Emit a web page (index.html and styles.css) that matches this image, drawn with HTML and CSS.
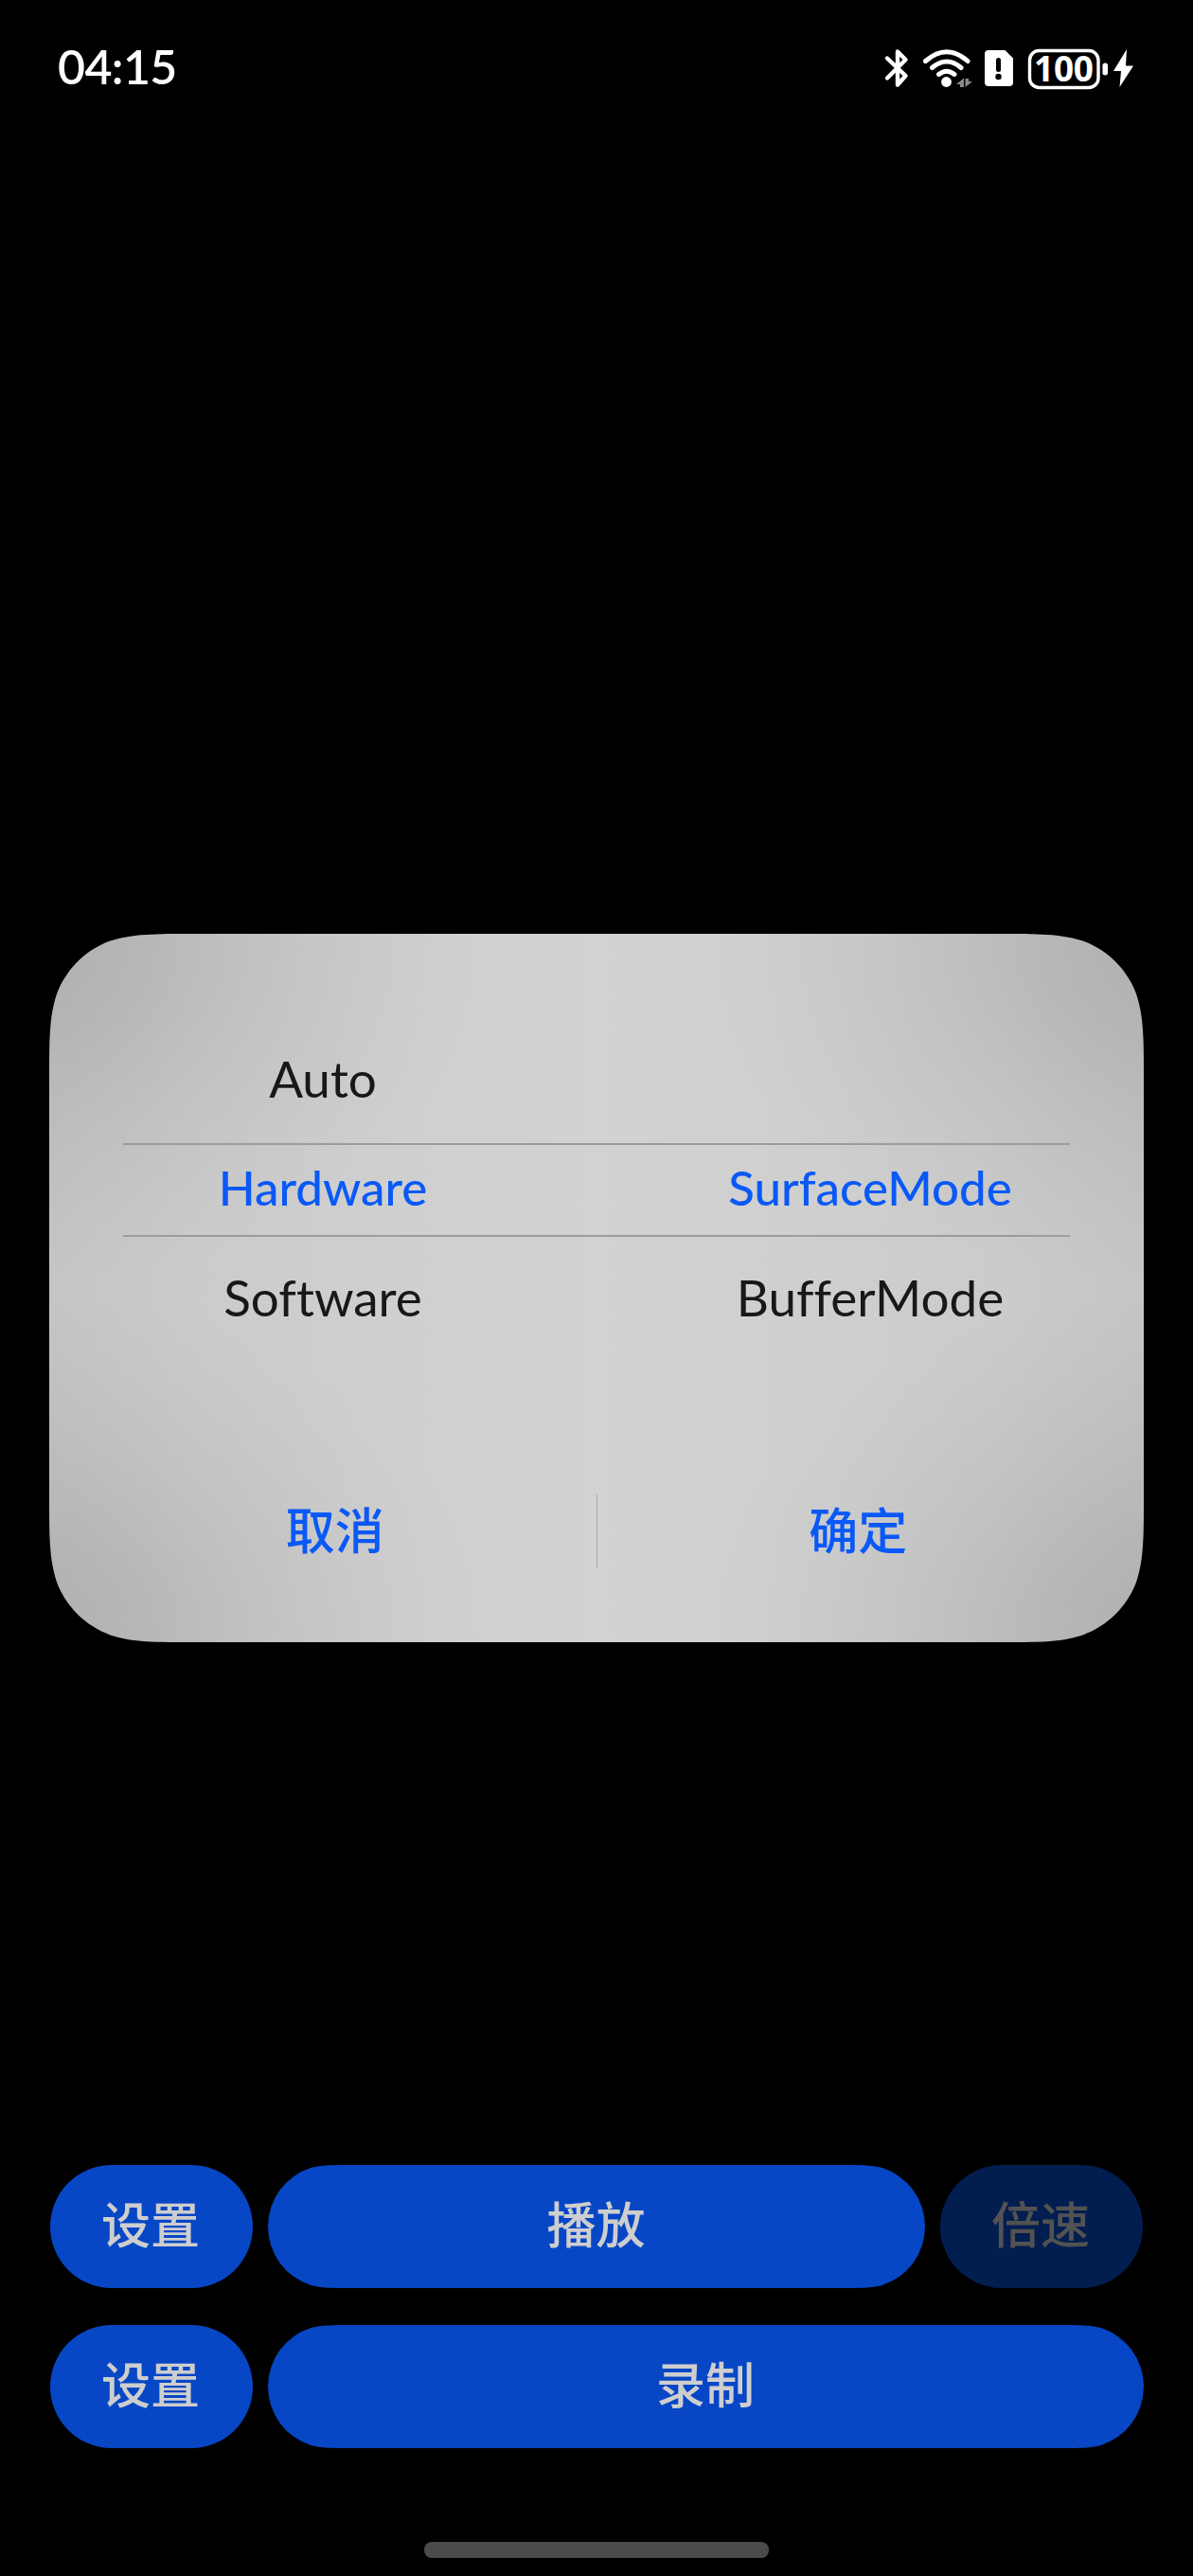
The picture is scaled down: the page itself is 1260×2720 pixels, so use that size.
FILE: index.html
```html
<!DOCTYPE html>
<html lang="zh-CN">
<head>
<meta charset="utf-8">
<title>播放器</title>
<link rel="stylesheet" href="styles.css">
</head>
<body>
<div class="screen">
  <header class="status">
    <time class="clock">04:15</time>
    <svg class="icons" width="280" height="60" viewBox="920 40 280 60" aria-label="status icons">
      <g fill="none" stroke="#fff" stroke-linecap="round" stroke-linejoin="round">
        <path stroke-width="4.4" d="M937 61.500 956.500 80 948 89.500V54.500L956.500 63 937 82.500"/>
        <path stroke-width="5" d="M977.500 64.500Q1000 45 1022 64.500M984.500 71.500Q1000 58.500 1015 71.500M991.500 78.500Q1000 72 1008 78.500"/>
      </g>
      <circle cx="999.500" cy="86.500" r="5.400" fill="#fff"/>
      <path fill="#8a8a8a" d="M1018 82.500V92H1014V89H1010ZM1019.500 92V83H1023V86H1027Z"/>
      <path fill="#fff" d="M1044 53H1061.500L1070 61.500V87Q1070 91 1066 91H1044Q1040 91 1040 87V57Q1040 53 1044 53Z"/>
      <path stroke="#000" stroke-width="5" stroke-linecap="round" d="M1054.500 63.500V73.500"/>
      <circle cx="1054.500" cy="81" r="3.200"/>
      <rect x="1087.500" y="53.500" width="72.500" height="39" rx="10" fill="none" stroke="#fff" stroke-width="3.400"/>
      <rect x="1164.500" y="66.500" width="5.500" height="13" rx="2.700" fill="#fff"/>
      <path fill="#fff" d="M1190 52 1176 75H1184L1182.500 92 1197 69.500H1189Z"/>
      <text class="battery" x="1123.500" y="86" text-anchor="middle" textLength="63">100</text>
    </svg>
  </header>

  <section class="dialog">
    <div class="picker">
      <div class="column">
        <span class="option">Auto</span>
        <span class="option current">Hardware</span>
        <span class="option">Software</span>
      </div>
      <div class="column">
        <span class="option"></span>
        <span class="option current">SurfaceMode</span>
        <span class="option">BufferMode</span>
      </div>
    </div>
    <div class="actions">
      <button class="action">取消</button>
      <div class="divider"></div>
      <button class="action">确定</button>
    </div>
  </section>

  <footer class="controls">
    <div class="row first">
      <button class="pill small">设置</button>
      <button class="pill play">播放</button>
      <button class="pill small disabled">倍速</button>
    </div>
    <div class="row">
      <button class="pill small">设置</button>
      <button class="pill record">录制</button>
    </div>
    <div class="home"></div>
  </footer>
</div>
</body>
</html>
```
FILE: styles.css
```css
* { box-sizing: border-box; }
body { margin: 0; background: #000; }
button { border: 0; padding: 0; background: none; }
.screen {
  width: 1260px; height: 2720px; background: #000;
  display: flex; flex-direction: column;
  font-family: Lato, "Noto Sans CJK SC", sans-serif;
}
.status {
  height: 986px; padding: 40px 60px 0 61px;
  display: flex; justify-content: space-between; align-items: flex-start;
}
.clock { color: #fff; font-size: 50px; line-height: 61px; font-weight: 600; letter-spacing: -0.6px; }
.battery { fill: #fff; font: 700 37px "Noto Sans", sans-serif; }

.dialog {
  --shade: rgba(0,0,0,.105), rgba(0,0,0,.085) 25%, rgba(0,0,0,.045) 55%, rgba(0,0,0,.015) 80%, transparent;
  width: 1156px; height: 748px; margin: 0 52px; padding: 95px 78px 0;
  background:
    radial-gradient(ellipse 470px 370px at 0 0, var(--shade)),
    radial-gradient(ellipse 470px 370px at 100% 0, var(--shade)),
    radial-gradient(ellipse 470px 370px at 0 100%, var(--shade)),
    radial-gradient(ellipse 470px 370px at 100% 100%, var(--shade)),
    linear-gradient(90deg, #c5c5c5, #cbcbcb 13%, #cfcfcf 30%, #d2d2d2 50%, #cfcfcf 70%, #cbcbcb 87%, #c5c5c5);
  clip-path: path("M155.900 0H1000.100C1045 0 1067.500 0 1091.600 7.600C1118.100 17.200 1138.800 37.900 1148.400 64.400C1156 88.500 1156 111 1156 155.900V592.100C1156 637 1156 659.500 1148.400 683.600C1138.800 710.100 1118.100 730.800 1091.600 740.400C1067.500 748 1045 748 1000.100 748H155.900C111 748 88.500 748 64.400 740.400C37.900 730.800 17.200 710.100 7.600 683.600C0 659.500 0 637 0 592.100V155.900C0 111 0 88.500 7.600 64.400C17.200 37.900 37.900 17.200 64.400 7.600C88.500 0 111 0 155.900 0Z");
}
.picker { display: flex; justify-content: space-between; height: 350px;
  background: linear-gradient(#9c9c9c, #9c9c9c) 0 126px / 100% 2px no-repeat,
              linear-gradient(#9c9c9c, #9c9c9c) 0 223px / 100% 2px no-repeat; }
.column { width: 422px; display: grid; grid-template-rows: 115px 115px 117px; }
.option {
  display: flex; align-items: center; justify-content: center;
  font-size: 53px; color: #181818; font-variant-ligatures: none;
}
.current { color: #0a59f7; font-weight: 500; font-size: 51px; }
.actions { display: flex; align-items: center; margin: 121px -52px 0; }
.action {
  flex: 1; height: 130px; padding-bottom: 8px; color: #0a59f7;
  font: 500 52px "Noto Sans CJK SC", sans-serif;
}
.divider { width: 1px; height: 78px; background: #adadad; }
.controls { margin-top: 552px; padding: 0 52px 0 53px; display: flex; flex-direction: column; gap: 39px; }
.row { display: flex; gap: 16px; }
.first { padding-right: 1px; }
.pill {
  height: 130px; padding: 0 2px 9px 0; border-radius: 65px; background: #0747c6; color: #cecece;
  font: 500 52px "Noto Sans CJK SC", sans-serif;
}
.small { width: 214px; }
.play, .record { padding-right: 1px; border-radius: 0; }
.play {
  width: 694px;
  clip-path: path("M86 0H608C626 0 638 .3 648 2.840A65 65 0 0 1 648 127.160C638 129.700 626 130 608 130H86C68 130 56 129.700 46 127.160A65 65 0 0 1 46 2.840C56 .3 68 0 86 0Z");
}
.record {
  width: 925px;
  clip-path: path("M86 0H839C857 0 869 .3 879 2.840A65 65 0 0 1 879 127.160C869 129.700 857 130 839 130H86C68 130 56 129.700 46 127.160A65 65 0 0 1 46 2.840C56 .3 68 0 86 0Z");
}
.disabled { background: #021d4f; color: #525252; }
.home { width: 364px; height: 17px; margin: 60px 0 0 395px; border-radius: 8px; background: #4b4b4b; }
```
